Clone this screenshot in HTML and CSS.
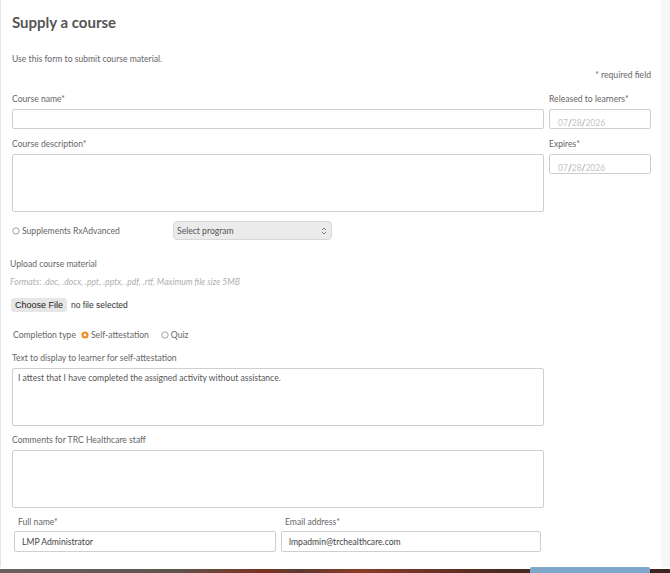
FILE: index.html
```html
<!DOCTYPE html>
<html>
<head>
<meta charset="utf-8">
<link rel="stylesheet" href="styles.css">
</head>
<body>
<div class="page">
  <div class="panel">
    <h1 class="title">Supply a course</h1>
    <p class="intro">Use this form to submit course material.</p>
    <p class="required">* required field</p>

    <div class="top">
      <div class="main-col">
        <label class="lbl">Course name*</label>
        <div class="field input"></div>
        <label class="lbl">Course description*</label>
        <div class="field textarea"></div>
      </div>
      <div class="side-col">
        <label class="lbl">Released to learners*</label>
        <div class="field date"><span class="d">07</span><span class="s">/</span><span class="d">28</span><span class="s">/</span><span class="d">2026</span></div>
        <label class="lbl">Expires*</label>
        <div class="field date"><span class="d">07</span><span class="s">/</span><span class="d">28</span><span class="s">/</span><span class="d">2026</span></div>
      </div>
    </div>

    <div class="supp-row">
      <div class="radio-opt supp">
        <svg class="radio" width="8" height="8" viewBox="0 0 8 8"><circle cx="4" cy="4" r="3.2" fill="#fff" stroke="#8a8a8a" stroke-width="0.8"/></svg>
        <span>Supplements RxAdvanced</span>
      </div>
      <div class="select">
        <span>Select program</span>
        <svg width="6" height="8" viewBox="0 0 6 8"><path d="M1 3 L3 1 L5 3 M1 5 L3 7 L5 5" fill="none" stroke="#777" stroke-width="0.9"/></svg>
      </div>
    </div>

    <div class="upload">
      <label class="lbl">Upload course material</label>
      <p class="formats">Formats: .doc, .docx, .ppt, .pptx, .pdf, .rtf, Maximum file size 5MB</p>
      <div class="file-row"><span class="file-btn">Choose File</span><span class="nofile">no file selected</span></div>
    </div>

    <div class="completion">
      <span>Completion type</span>
      <div class="radio-opt">
        <svg class="radio" width="8" height="8" viewBox="0 0 8 8"><circle cx="4" cy="4" r="3.6" fill="#f0902c"/><circle cx="4" cy="4" r="1.3" fill="#fff"/></svg>
        <span>Self-attestation</span>
      </div>
      <div class="radio-opt">
        <svg class="radio" width="8" height="8" viewBox="0 0 8 8"><circle cx="4" cy="4" r="3.2" fill="#fff" stroke="#8a8a8a" stroke-width="0.8"/></svg>
        <span>Quiz</span>
      </div>
    </div>

    <div class="block">
      <label class="lbl">Text to display to learner for self-attestation</label>
      <div class="field textarea text">I attest that I have completed the assigned activity without assistance.</div>
      <label class="lbl">Comments for TRC Healthcare staff</label>
      <div class="field textarea"></div>
    </div>

    <div class="names">
      <div class="name-col">
        <label class="lbl">Full name*</label>
        <div class="field input val">LMP Administrator</div>
      </div>
      <div class="name-col">
        <label class="lbl">Email address*</label>
        <div class="field input val">lmpadmin@trchealthcare.com</div>
      </div>
    </div>
  </div>
  <div class="side-strip"></div>
</div>
<div class="footer"><div class="foot-btn"></div></div>
</body>
</html>
```

FILE: styles.css
```css
* { box-sizing: border-box; }
html, body { margin: 0; padding: 0; }
body {
  width: 670px;
  height: 573px;
  overflow: hidden;
  background: #f7f7f7;
  font-family: Lato, "Open Sans", sans-serif;
  color: #666;
  font-size: 8.6px;
}
.page { display: flex; height: 567px; }
.panel {
  width: 661px;
  background: #fff;
  border-left: 1px solid #e4e4e4;
  padding: 0 0 0 11px;
}
.side-strip { flex: 1; background: #f7f7f7; }
.title {
  margin: 12px 0 0 0;
  font-size: 15px;
  font-weight: 700;
  line-height: 20px;
  color: #555;
}
.intro { margin: 21px 0 0 0; line-height: 12px; }
.required { margin: 4px 0 0 0; line-height: 12px; text-align: right; padding-right: 10px; }
.top { display: flex; gap: 5px; margin-top: 12px; }
.main-col { width: 532px; display: flex; flex-direction: column; }
.side-col { width: 102px; display: flex; flex-direction: column; }
.lbl { display: block; line-height: 12px; margin-bottom: 4px; color: #666; }
.field {
  border: 1px solid #cfcfcf;
  border-radius: 2px;
  background: #fff;
}
.input { height: 20px; margin-bottom: 9px; }
.textarea { height: 58px; }
.date {
  height: 20px;
  margin-bottom: 9px;
  padding: 8px 0 0 8px;
  font-size: 8.5px;
  line-height: 11px;
}
.date .d { color: #c4c4c4; }
.date .s { color: #888; }
.supp-row { display: flex; align-items: center; margin-top: 9px; height: 19px; }
.radio-opt { display: flex; align-items: center; gap: 2px; }
.radio { display: block; }
.supp { width: 161px; }
.select {
  width: 159px;
  height: 19px;
  background: #ebebeb;
  border: 1px solid #d8d8d8;
  border-radius: 4px;
  display: flex;
  align-items: center;
  justify-content: space-between;
  padding: 0 4px 0 3px;
  color: #555;
}
.upload { margin-top: 18px; margin-left: -2px; }
.upload .lbl { margin-bottom: 6px; }
.formats { margin: 0; line-height: 12px; font-style: italic; color: #b0b0b0; font-size: 8.6px; }
.file-row { display: flex; align-items: center; gap: 4px; margin-top: 10px; margin-left: 1px; }
.file-btn {
  background: #e6e6e6;
  border-radius: 3px;
  font-family: "Liberation Sans", Arial, sans-serif;
  font-size: 9px;
  color: #222;
  padding: 1px 4px;
  line-height: 12px;
}
.nofile { font-family: "Liberation Sans", Arial, sans-serif; font-size: 8.5px; color: #333; }
.completion {
  display: flex;
  align-items: center;
  gap: 5px;
  margin-top: 17px;
  line-height: 12px;
  margin-left: 1px;
}
.completion > .radio-opt:last-child { margin-left: 7px; }
.block { margin-top: 11px; width: 532px; }
.block .textarea { margin-bottom: 8px; }
.text { padding: 4px 5px; line-height: 11px; color: #555; }
.names { display: flex; gap: 5px; margin-left: 2px; }
.name-col { width: 262px; }
.name-col:last-child { width: 260px; }
.names .lbl { margin-left: 4px; margin-bottom: 3px; }
.val { height: 21px; padding: 5px 7px; line-height: 10px; color: #444; margin-bottom: 0; }
.footer {
  height: 6px;
  background: linear-gradient(to bottom, #fff 0, #fff 2px, transparent 2px),
              linear-gradient(to right, #6b625d 0, #5e524c 180px, #7a3320 260px, #5a3a30 300px, #8a3c28 360px, #4a2a22 500px, #3d2420 670px);
  display: flex;
}
.foot-btn { margin-left: 530px; width: 120px; height: 6px; background: #7ea8cb; border-radius: 2px 2px 0 0; }
```
